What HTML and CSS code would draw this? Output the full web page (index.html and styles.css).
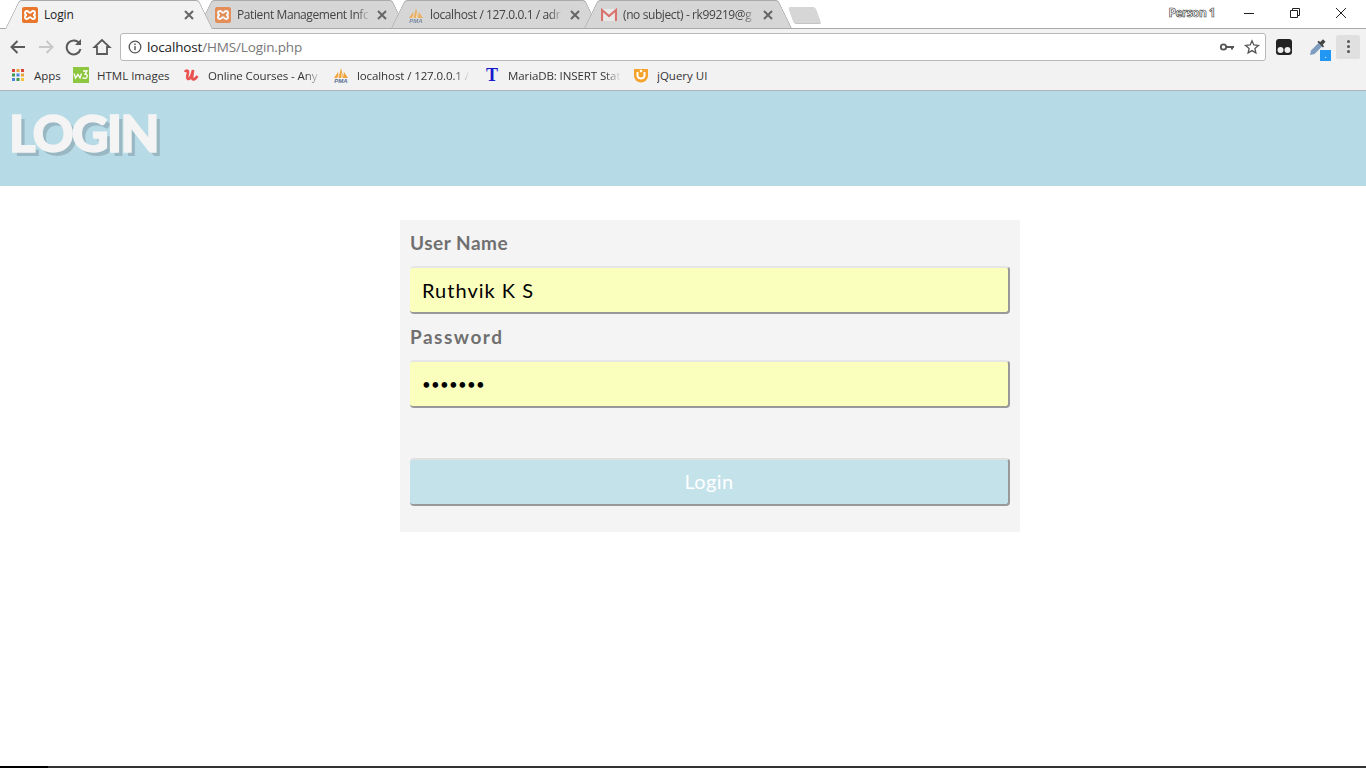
FILE: index.html
```html
<!DOCTYPE html>
<html>
<head>
    <meta charset="utf-8">
    <title>Login</title>
    <link rel="stylesheet" href="styles.css">
</head>
<body>
    <svg class="defs" width="0" height="0">
        <symbol id="xampp" viewBox="0 0 16 16">
            <rect width="16" height="16" rx="2" fill="#e8762d"/>
            <path d="M5 4c1.500 0 2 1.800 3 1.800S9.500 4 11 4s2 1 2 2-.8 2-2 2c1.200 0 2 1 2 2s-.5 2-2 2-2-1.800-3-1.800S6.500 12 5 12s-2-1-2-2 .8-2 2-2c-1.200 0-2-1-2-2s.5-2 2-2z" fill="none" stroke="#fff" stroke-width="1.900"/>
        </symbol>
        <symbol id="pma" viewBox="0 0 16 16">
            <path d="M1 11 5 5l1 6zM5.500 11 8 1l2.500 10zM10 11l1-6 4 6z" fill="#f0a33c"/>
            <path d="M4 11 5.500 7l.5 4zM8 11l.5-6 1.500 6z" fill="#f9dcae"/>
        </symbol>
        <symbol id="close" viewBox="0 0 10 10">
            <path d="M1 1l8 8M9 1 1 9" fill="none" stroke="#666" stroke-width="2"/>
        </symbol>
    </svg>

    <div class="tabstrip">
        <div class="tab tab-active">
            <svg class="fav"><use href="#xampp"/></svg>
            <span class="tab-title">Login</span>
            <svg class="tab-close"><use href="#close"/></svg>
        </div>
        <div class="tab">
            <svg class="fav"><use href="#xampp"/></svg>
            <span class="tab-title tab-fade">Patient Management Infc</span>
            <svg class="tab-close"><use href="#close"/></svg>
        </div>
        <div class="tab">
            <svg class="fav" viewBox="0 0 16 16"><use href="#pma"/><text x="8" y="15.500" class="pma-text">PMA</text></svg>
            <span class="tab-title tab-fade">localhost / 127.0.0.1 / adr</span>
            <svg class="tab-close"><use href="#close"/></svg>
        </div>
        <div class="tab">
            <svg class="fav" viewBox="0 0 16 16">
                <rect y="2" width="16" height="12" fill="#eee"/>
                <path d="M1 14V3l7 6 7-6v11" fill="none" stroke="#d9534a" stroke-width="2.200"/>
            </svg>
            <span class="tab-title tab-fade">(no subject) - rk99219@g</span>
            <svg class="tab-close"><use href="#close"/></svg>
        </div>
        <div class="new-tab"></div>

        <div class="window-controls">
            <span class="person">Person 1</span>
            <svg class="win-btn" viewBox="0 0 46 28"><path d="M18 13.500h10" stroke="#222" fill="none"/></svg>
            <svg class="win-btn" viewBox="0 0 46 28"><path d="M18.500 10.500h7v7h-7zM20.500 10.500v-2h7v7h-2" stroke="#222" fill="none"/></svg>
            <svg class="win-btn" viewBox="0 0 46 28"><path d="M18 8l10 10M28 8 18 18" stroke="#222" fill="none"/></svg>
        </div>
    </div>

    <div class="toolbar">
        <svg class="nav-icon" viewBox="0 0 28 28"><path d="M21 14H8M13.500 8 7.500 14l6 6" fill="none" stroke="#5a5a5a" stroke-width="2"/></svg>
        <svg class="nav-icon" viewBox="0 0 28 28"><path d="M7 14h13M14.500 8l6 6-6 6" fill="none" stroke="#c8c8c8" stroke-width="2"/></svg>
        <svg class="nav-icon" viewBox="0 0 28 28"><path d="M19.500 10.500A7 7 0 1 0 20.500 16" fill="none" stroke="#5a5a5a" stroke-width="2"/><path d="M21 6v6h-6z" fill="#5a5a5a"/></svg>
        <svg class="nav-icon" viewBox="0 0 28 28"><path d="M14 7 6.500 14H9v7h4v0h2v0h4v-7h2.500z" fill="none" stroke="#5a5a5a" stroke-width="1.800"/></svg>

        <div class="omnibox">
            <svg class="info" viewBox="0 0 14 14"><circle cx="7" cy="7" r="5.800" fill="none" stroke="#555" stroke-width="1.300"/><path d="M7 6v4.200M7 3.500v1.400" stroke="#555" stroke-width="1.400"/></svg>
            <span class="url">localhost<span class="url-path">/HMS/Login.php</span></span>
            <svg class="omni-icon" viewBox="0 0 16 16"><circle cx="4.500" cy="8" r="2.700" fill="none" stroke="#555" stroke-width="1.800"/><path d="M7 7h8v2h-1v1.500h-2V9H7z" fill="#555"/></svg>
            <svg class="omni-icon" viewBox="0 0 16 16"><path d="M8 1.800 9.800 6l4.600.4-3.500 3 1 4.500L8 11.600l-3.900 2.300 1-4.500-3.500-3L6.200 6z" fill="none" stroke="#555" stroke-width="1.300"/></svg>
        </div>

        <svg class="ext-tamper" viewBox="0 0 16 16"><rect width="16" height="16" rx="3" fill="#222"/><circle cx="4.500" cy="11" r="3" fill="#eee"/><circle cx="11.500" cy="11" r="3" fill="#eee"/></svg>
        <div class="ext-dropper">
            <svg viewBox="0 0 18 18"><path d="M1 17 2 12.500 9.500 5l3.500 3.500L5.500 16z" fill="#7d9cc0"/><path d="M8.500 4l5.500 5.500 1-1-1.200-2 2.700-2.700-2.500-2.500-2.700 2.700-2-1.200z" fill="#444"/></svg>
            <span class="ext-badge">.</span>
        </div>
        <div class="menu-btn"><i></i><i></i><i></i></div>
    </div>

    <div class="bookmarks">
        <div class="bm bm-apps">
            <svg class="fav" viewBox="0 0 14 14">
                <path d="M1 1h3v3H1z" fill="#d9453a"/><path d="M5.500 1h3v3h-3z" fill="#e8a33a"/><path d="M10 1h3v3h-3z" fill="#d9453a"/>
                <path d="M1 5.500h3v3H1z" fill="#3f9a55"/><path d="M5.500 5.500h3v3h-3z" fill="#4a86e0"/><path d="M10 5.500h3v3h-3z" fill="#e8a33a"/>
                <path d="M1 10h3v3H1z" fill="#4a86e0"/><path d="M5.500 10h3v3h-3z" fill="#3f9a55"/><path d="M10 10h3v3h-3z" fill="#f2c53a"/>
            </svg>
            <span class="bm-title">Apps</span>
        </div>
        <div class="bm bm-w3">
            <svg class="fav" viewBox="0 0 16 16"><rect width="16" height="16" fill="#8dc63f"/><path d="M1 6.500l1.500 4.500L5 7.500 7 11l1.500-4.500M10 4h4l-2 3c2 0 2.500 1.500 2 3s-3 2-4.500.5" fill="none" stroke="#fff" stroke-width="1.300"/></svg>
            <span class="bm-title">HTML Images</span>
        </div>
        <div class="bm bm-long">
            <svg class="fav" viewBox="0 0 16 16"><path d="M1 5c1-2 3-2 3 0 0 3-2 6 0 7 2 .5 4-4 5-9 0 3-1.500 7-.5 9 1 1 3 0 5-3" fill="none" stroke="#ea5252" stroke-width="2.600"/></svg>
            <span class="bm-title bm-fade">Online Courses - Any</span>
        </div>
        <div class="bm bm-long bm-pma">
            <svg class="fav" viewBox="0 0 16 16"><use href="#pma"/><text x="8" y="15.500" class="pma-text">PMA</text></svg>
            <span class="bm-title bm-fade">localhost / 127.0.0.1 /</span>
        </div>
        <div class="bm bm-long">
            <span class="fav bm-t">T</span>
            <span class="bm-title bm-fade">MariaDB: INSERT Stat</span>
        </div>
        <div class="bm">
            <svg class="fav" viewBox="0 0 16 16"><path d="M1 2h14v7a7 6.500 0 0 1-14 0z" fill="#f4a32c"/><path d="M4.500 5v3.500a3.500 3 0 0 0 7 0V5" fill="none" stroke="#fff" stroke-width="2"/><circle cx="8" cy="4" r="1.300" fill="#fff"/></svg>
            <span class="bm-title">jQuery UI</span>
        </div>
    </div>

    <div class="page">
        <div class="page-header">
            <h1 class="page-title">LOGIN</h1>
        </div>

        <div class="page-main">
            <form class="login-form">
                <label class="field-label">User Name</label>
                <input class="field-input" type="text" value="Ruthvik K S">
                <label class="field-label label-pass">Password</label>
                <input class="field-input input-pass" type="password" value="1234567">
                <button class="login-btn" type="button">Login</button>
            </form>
        </div>
    </div>

    <div class="screen-edge"></div>
</body>
</html>
```

FILE: styles.css
```css
* {
    box-sizing: border-box;
}

html, body {
    height: 100%;
}

body {
    margin: 0;
    display: flex;
    flex-direction: column;
    overflow: hidden;
    background-color: #fff;
    font-family: "Open Sans", "Noto Sans", sans-serif;
}

.defs {
    position: absolute;
}

.fav {
    display: block;
    flex: none;
    width: 16px;
    height: 16px;
}

.pma-text {
    fill: #5a6f93;
    font-family: "Liberation Sans", sans-serif;
    font-size: 6px;
    font-style: italic;
    font-weight: 700;
    text-anchor: middle;
}

/* tabs */
.tabstrip {
    display: flex;
    flex: none;
    isolation: isolate;
    height: 29px;
    padding-left: 5px;
    background-color: #fff;
    border-bottom: 1px solid #a9a9a9;
}

.tab {
    position: relative;
    display: flex;
    flex: none;
    align-items: center;
    width: 208px;
    height: 29px;
    margin-right: -15px;
    padding-left: 17px;
    color: #444;
    font-size: 12px;
}

.tab::before, .tab::after {
    content: "";
    position: absolute;
    top: 0;
    bottom: 1px;
    width: 50%;
    background-color: #d6d6d6;
    border-top: 1px solid #aaa;
    z-index: -1;
}

.tab::before {
    left: 0;
    border-left: 1px solid #aaa;
    border-radius: 3px 0 0 0;
    transform: skewX(-26deg);
    transform-origin: bottom left;
}

.tab::after {
    right: 0;
    border-right: 1px solid #aaa;
    border-radius: 0 3px 0 0;
    transform: skewX(26deg);
    transform-origin: bottom right;
}

.tab .fav {
    opacity: .75;
}

.tab-active {
    z-index: 1;
    color: #222;
}

.tab-active .fav {
    opacity: 1;
}

.tab-active::before, .tab-active::after {
    bottom: 0;
    background-color: #f2f2f2;
}

.tab-title {
    flex: none;
    width: 133px;
    margin-left: 6px;
    overflow: hidden;
    white-space: nowrap;
    letter-spacing: -.15px;
}

.tab-fade {
    letter-spacing: -.4px;
    -webkit-mask-image: linear-gradient(to right, #000 90%, transparent);
    mask-image: linear-gradient(to right, #000 90%, transparent);
}

.tab-close {
    flex: none;
    width: 10px;
    height: 10px;
    margin-left: 7px;
}

.new-tab {
    flex: none;
    width: 27px;
    height: 16px;
    margin: 7px 0 0 14px;
    background-color: #d6d6d6;
    border-radius: 2px;
    box-shadow: 0 1px 0 #c4c4c4;
    transform: skewX(20deg);
}

.window-controls {
    display: flex;
    align-items: flex-start;
    margin-left: auto;
    margin-right: 2px;
}

.person {
    margin-right: 11px;
    padding-top: 4px;
    color: #fff;
    font-size: 12px;
    font-weight: 700;
    letter-spacing: -.6px;
    -webkit-text-stroke: .6px #333;
}

.win-btn {
    display: block;
    width: 46px;
    height: 28px;
}

/* toolbar */
.toolbar {
    display: flex;
    flex: none;
    align-items: center;
    height: 33px;
    padding: 2px 0 0 4px;
    background-color: #f2f2f2;
}

.nav-icon {
    display: block;
    flex: none;
    width: 28px;
    height: 28px;
}

.omnibox {
    display: flex;
    flex: none;
    align-items: center;
    width: 1146px;
    height: 28px;
    margin-left: 4px;
    padding: 0 5px 0 7px;
    background-color: #fff;
    border: 1px solid #b8b8b8;
    border-radius: 3px;
}

.info {
    flex: none;
    width: 14px;
    height: 14px;
}

.url {
    flex: 1;
    margin-left: 5px;
    color: #222;
    font-size: 13.500px;
    letter-spacing: -.15px;
}

.url-path {
    color: #777;
}

.omni-icon {
    flex: none;
    width: 16px;
    height: 16px;
    margin-left: 9px;
}

.ext-tamper {
    flex: none;
    width: 16px;
    height: 16px;
    margin-left: 10px;
}

.ext-dropper {
    position: relative;
    flex: none;
    width: 18px;
    height: 18px;
    margin: 0 9px 0 17px;
}

.ext-dropper svg {
    display: block;
    width: 18px;
    height: 18px;
}

.ext-badge {
    position: absolute;
    right: -4px;
    bottom: -5px;
    width: 11px;
    height: 11px;
    background-color: #2196f3;
    color: #fff;
    font-size: 9px;
    line-height: 9px;
    text-align: center;
}

.menu-btn {
    display: flex;
    flex: none;
    flex-direction: column;
    align-items: center;
    justify-content: center;
    gap: 2px;
    width: 24px;
    height: 24px;
    background-color: #e0e0e0;
    border-radius: 2px;
}

.menu-btn i {
    width: 3px;
    height: 3px;
    background-color: #555;
    border-radius: 50%;
}

/* bookmarks */
.bookmarks {
    display: flex;
    flex: none;
    align-items: center;
    height: 29px;
    padding: 0 0 2px 9px;
    background-color: #f2f2f2;
    border-bottom: 1px solid #aeb4b7;
}

.bm {
    display: flex;
    flex: none;
    align-items: center;
    color: #333;
    font-size: 11.500px;
}

.bm-title {
    margin-left: 8px;
    overflow: hidden;
    white-space: nowrap;
}

.bm-apps {
    width: 64px;
}

.bm-apps .fav {
    width: 14px;
    height: 14px;
    margin: 0 1px 0 2px;
}

.bm-w3 {
    width: 111px;
}

.bm-long {
    width: 149px;
}

.bm-pma {
    width: 151px;
}

.bm-fade {
    width: 113px;
    letter-spacing: -.1px;
    -webkit-mask-image: linear-gradient(to right, #000 86%, transparent);
    mask-image: linear-gradient(to right, #000 86%, transparent);
}

.bm-t {
    color: #1a1acc;
    font-family: "Liberation Serif", serif;
    font-size: 18px;
    font-weight: 700;
    line-height: 16px;
    text-align: center;
}

/* page */
.page {
    flex: 1;
    background-color: #fff;
}

.page-header {
    height: 95px;
    padding: 10px 0 0 9px;
    background-color: #b6dbe6;
}

.page-title {
    margin: 0;
    color: #f4f4f4;
    font-family: Lato, sans-serif;
    font-size: 51px;
    font-weight: 900;
    line-height: 64px;
    letter-spacing: -2px;
    -webkit-text-stroke: 1.500px #f4f4f4;
    text-shadow: 4px 4px 0 #9ab8c3;
}

.page-main {
    padding: 34px 0 0 400px;
}

.login-form {
    display: flex;
    flex-direction: column;
    width: 620px;
    padding: 10px 10px 26px;
    background-color: #f4f4f4;
}

.field-label {
    margin-bottom: 10px;
    color: #707070;
    font-family: Lato, sans-serif;
    font-size: 19px;
    font-weight: 700;
    line-height: 26px;
    letter-spacing: .5px;
}

.label-pass {
    letter-spacing: 1.500px;
}

.field-input {
    width: 600px;
    height: 48px;
    margin-bottom: 10px;
    padding: 0 12px;
    background-color: #faffbd;
    border: 0;
    border-top: 2px solid #e6e6e6;
    border-right: 2px solid #999;
    border-bottom: 2px solid #999;
    border-radius: 4px;
    color: #000;
    font-family: Lato, sans-serif;
    font-size: 20px;
    letter-spacing: 1px;
}

.input-pass {
    font-size: 15px;
    letter-spacing: .3px;
}

.login-btn {
    width: 600px;
    height: 48px;
    margin-top: 40px;
    padding-bottom: 3px;
    background-color: #c4e2ea;
    border: 0;
    border-top: 2px solid #e0e0e0;
    border-right: 2px solid #999;
    border-bottom: 2px solid #999;
    border-radius: 4px;
    color: #fff;
    font-family: Lato, sans-serif;
    font-size: 20px;
    letter-spacing: .4px;
}

.screen-edge {
    flex: none;
    height: 2px;
    background: linear-gradient(to right, #000 48px, #333 48px);
}
```
